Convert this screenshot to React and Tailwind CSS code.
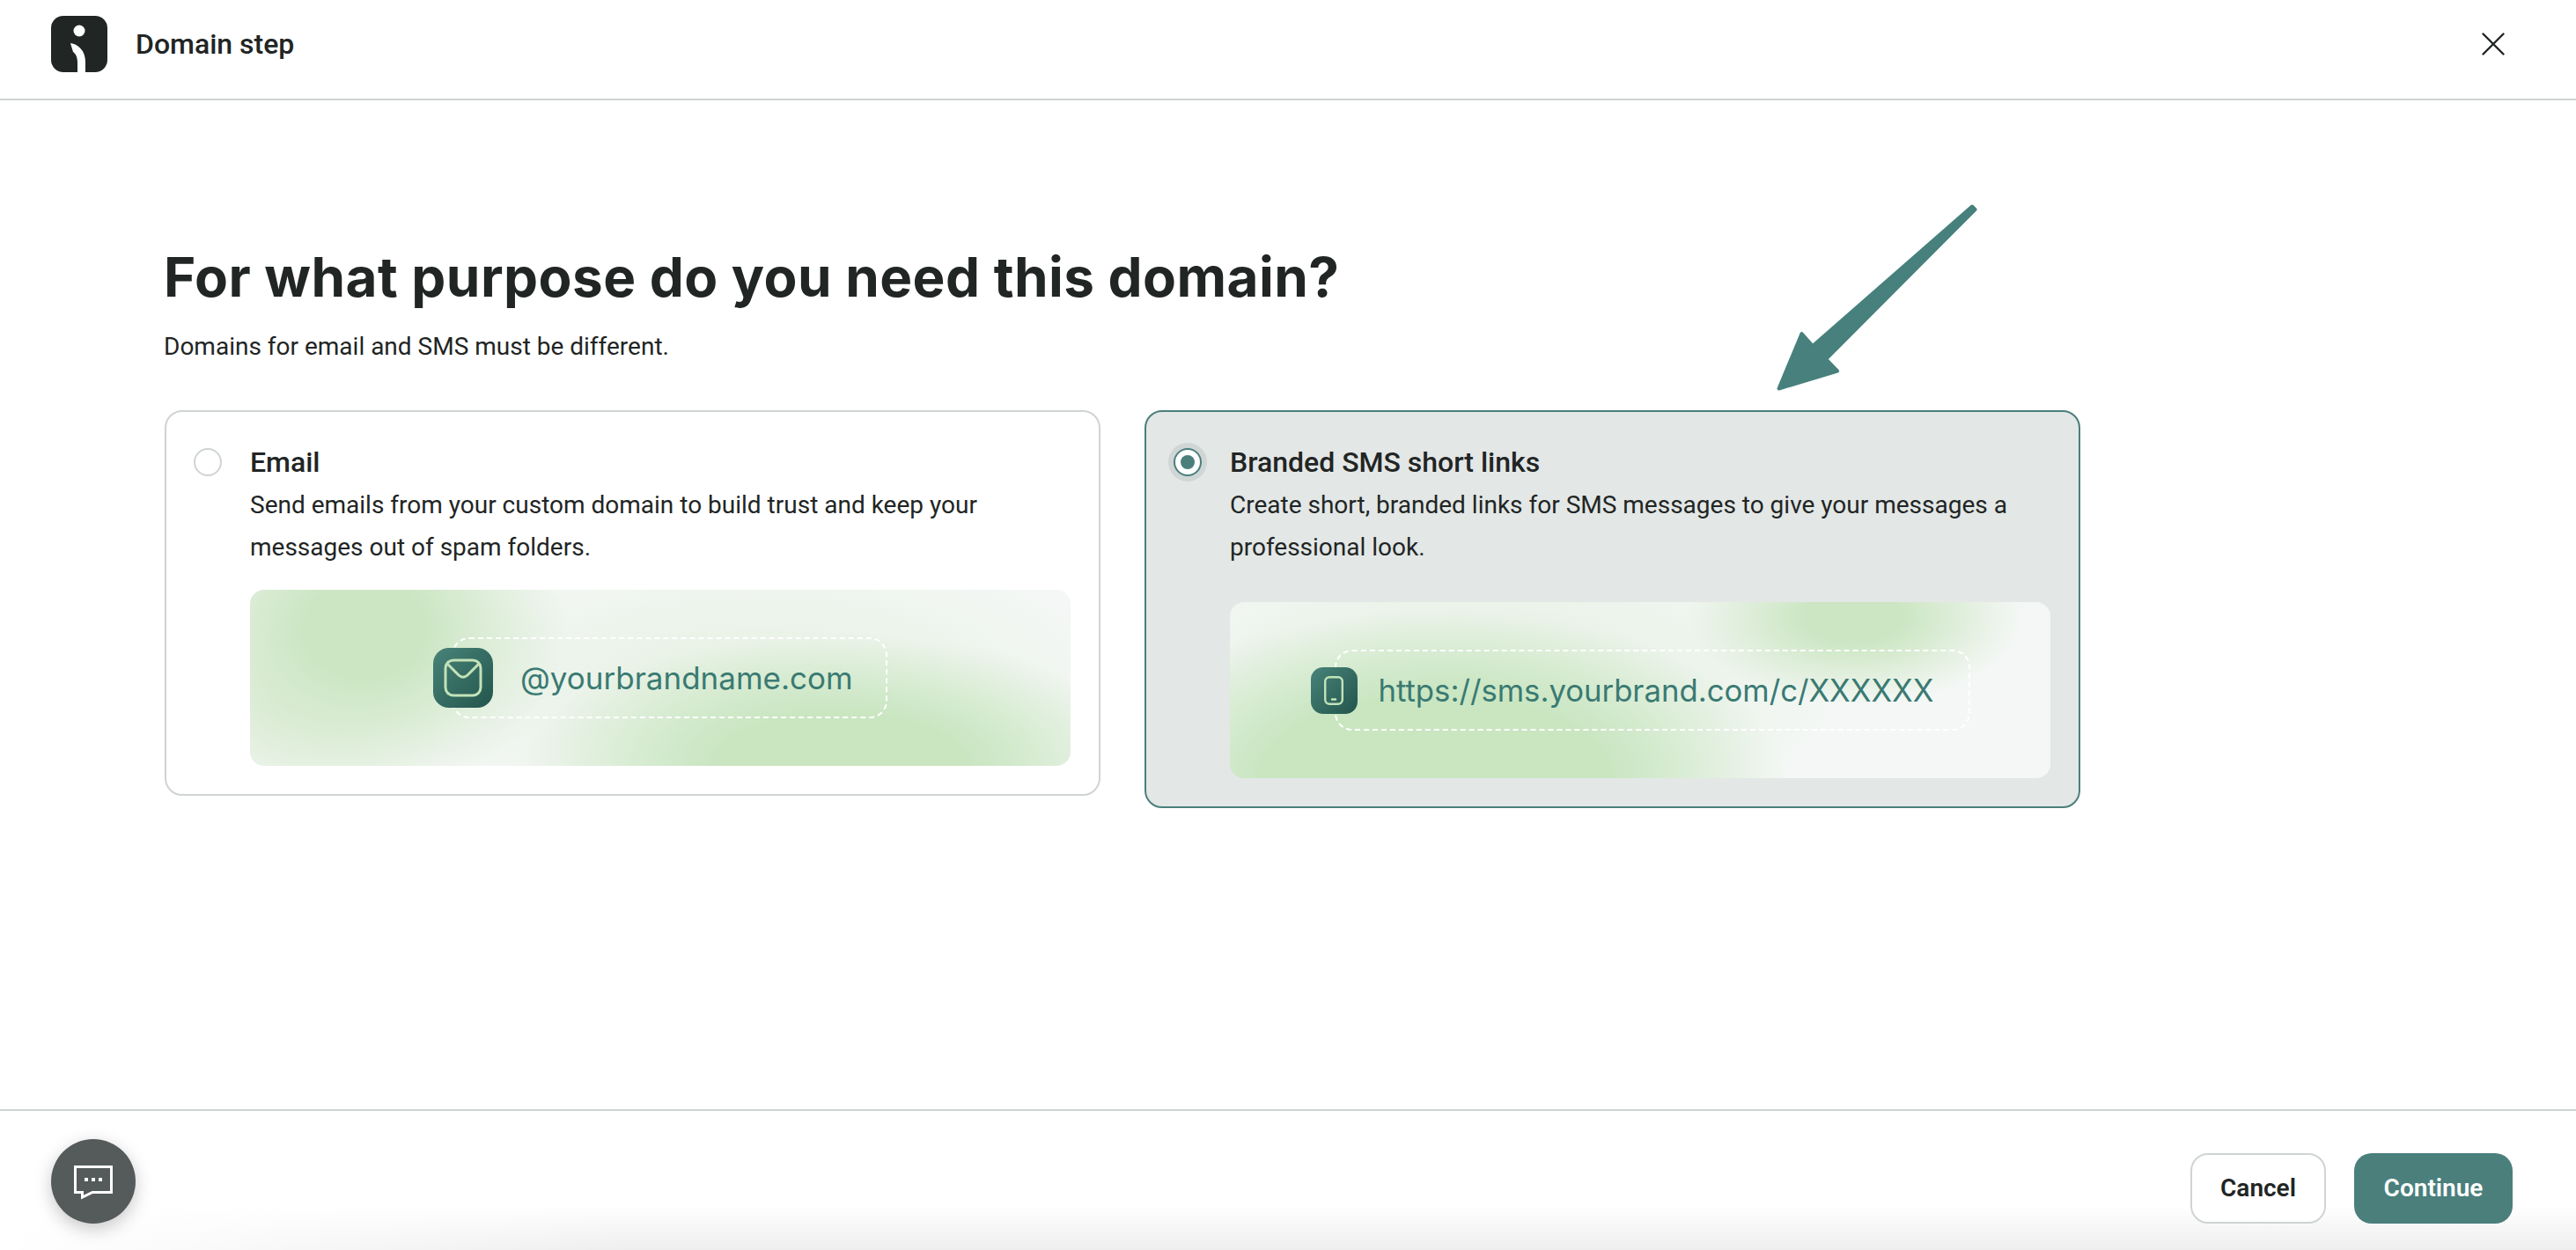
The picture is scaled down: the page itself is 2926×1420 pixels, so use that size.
import React from 'react';

const Logo = () => (
  <svg width="64" height="64" viewBox="0 0 64 64" className="shrink-0">
    <rect width="64" height="64" rx="14" fill="#212524" />
    <circle cx="32" cy="17" r="6.5" fill="#fff" />
    <path d="M22 31 C31 32 39 40 39 52 L39 64 L30 64 L30 53 C30 47 28 43 25 41 Z" fill="#fff" />
  </svg>
);

const CloseIcon = () => (
  <svg width="26" height="26" viewBox="0 0 26 26" fill="none" stroke="#212524" strokeWidth="2.4" strokeLinecap="round">
    <path d="M1.5 1.5 L24.5 24.5 M24.5 1.5 L1.5 24.5" />
  </svg>
);

const MailTile = () => (
  <div className="shrink-0 z-10 w-[68px] h-[68px] rounded-[18px] bg-gradient-to-br from-[#488379] to-[#23564d] flex items-center justify-center">
    <svg width="44" height="44" viewBox="0 0 44 44" fill="none" stroke="#c3e2b8" strokeWidth="3" strokeLinecap="round">
      <rect x="2" y="2" width="40" height="40" rx="9" />
      <path d="M4 6 L17 19 Q22 23.5 27 19 L40 6" />
    </svg>
  </div>
);

const PhoneTile = () => (
  <div className="shrink-0 z-10 w-[53px] h-[53px] rounded-[14px] bg-gradient-to-br from-[#488379] to-[#23564d] flex items-center justify-center">
    <svg width="22" height="33" viewBox="0 0 22 33" fill="none" stroke="#c3e2b8" strokeWidth="2.4" strokeLinecap="round">
      <rect x="1.2" y="1.2" width="19.6" height="30.6" rx="5" />
      <path d="M9 26.5 H13" />
    </svg>
  </div>
);

const Radio = ({ checked }) =>
  checked ? (
    <div className="shrink-0 w-8 h-8 mt-[9px] rounded-full bg-white border-2 border-[#4a7f7c] shadow-[0_0_0_6px_#d0d5d5] flex items-center justify-center">
      <div className="w-4 h-4 rounded-full bg-[#4a7f7c]" />
    </div>
  ) : (
    <div className="shrink-0 w-8 h-8 mt-[9px] rounded-full bg-white border-2 border-[#cfd4d3]" />
  );

const OptionCard = ({ checked, title, children, preview, previewClass }) => (
  <div
    className={`w-[1063px] shrink-0 rounded-[20px] border-2 pl-[31px] pr-8 pt-[32px] pb-8 flex gap-8 ${
      checked ? 'bg-[#e3e7e6] border-[#4a7f7c]' : 'bg-white border-[#cfd4d3]'
    }`}
  >
    <Radio checked={checked} />
    <div className="flex-1 min-w-0">
      <h3 className="text-[32px] leading-[50px] font-medium text-[#212524]">{title}</h3>
      <p className="text-[28px] leading-[48px] text-[#212524]">{children}</p>
      <div className={`h-[200px] rounded-[16px] flex items-center justify-center bg-[#f4f7f5] ${previewClass}`}>{preview}</div>
    </div>
  </div>
);

export default function App() {
  return (
    <div className="relative h-[1420px] flex flex-col bg-white font-['Roboto',sans-serif] overflow-hidden">
      <header className="h-[114px] shrink-0 border-b-2 border-[#cfd4d3] flex items-start justify-between pl-[58px] pr-[81px]">
        <div className="flex items-center gap-[32px] mt-[18px]">
          <Logo />
          <span className="text-[32px] leading-[64px] font-medium text-[#212524]">Domain step</span>
        </div>
        <button className="mt-[37px]">
          <CloseIcon />
        </button>
      </header>

      <main className="flex-1 pl-[187px] pt-[161px]">
        <h1 className="font-['Inter',sans-serif] text-[62px] leading-[80px] tracking-[0.45px] font-bold text-[#212524] -ml-px">
          For what purpose do you need this domain?
        </h1>
        <p className="text-[28px] leading-[40px] mt-[19px] text-[#212524] -ml-px">Domains for email and SMS must be different.</p>

        <div className="flex items-start gap-[50px] mt-[52px]">
          <OptionCard
            title="Email"
            previewClass="mt-[24px] bg-[radial-gradient(ellipse_230px_190px_at_14%_22%,#cce6c3_30%,transparent_100%),radial-gradient(ellipse_360px_150px_at_72%_100%,#c9e6c1_40%,transparent_100%),radial-gradient(ellipse_420px_180px_at_62%_62%,#e4f0e0,transparent_100%),radial-gradient(ellipse_200px_180px_at_3%_70%,#e6f0e2,transparent_100%)]"
            preview={
              <div className="flex items-center">
                <MailTile />
                <div className="-ml-[47px] w-[495px] h-[92px] rounded-[20px] border-2 border-dashed border-white flex items-center pl-[76px] font-['Inter',sans-serif] text-[35px] text-[#3a7a72]">
                  @yourbrandname.com
                </div>
              </div>
            }
          >
            Send emails from your custom domain to build trust and keep your messages out of spam folders.
          </OptionCard>

          <OptionCard
            checked
            title="Branded SMS short links"
            previewClass="mt-[38px] bg-[radial-gradient(ellipse_190px_100px_at_76%_8%,#cce6c3_30%,transparent_100%),radial-gradient(ellipse_400px_190px_at_25%_100%,#c9e6c1_50%,transparent_100%),radial-gradient(ellipse_420px_170px_at_30%_45%,#e2efde,transparent_100%)]"
            preview={
              <div className="flex items-center">
                <PhoneTile />
                <div className="-ml-[26px] w-[722px] h-[92px] rounded-[20px] border-2 border-dashed border-white flex items-center pl-[48px] font-['Inter',sans-serif] text-[34.7px] text-[#3a7a72]">
                  https://sms.yourbrand.com/c/XXXXXX
                </div>
              </div>
            }
          >
            Create short, branded links for SMS messages to give your messages a professional look.
          </OptionCard>
        </div>
      </main>

      <footer className="h-[160px] shrink-0 border-t-2 border-[#cfd4d3] flex items-start justify-between pl-[58px] pr-[72px] pt-[32px] bg-[linear-gradient(to_right,#ffffff,transparent_25%),linear-gradient(to_top,#eeeeee,#ffffff_50px)]">
        <button className="w-24 h-24 rounded-full bg-[#555b5b] shadow-[0_6px_20px_rgba(0,0,0,0.22)] flex items-center justify-center">
          <svg width="96" height="96" viewBox="0 0 96 96" fill="none">
            <path d="M27.5 31.5 H68.5 V60.5 H47 L35.5 66 V60.5 H27.5 Z" stroke="#fff" strokeWidth="3" />
            <rect x="38" y="44" width="4" height="4" fill="#fff" />
            <rect x="46" y="44" width="4" height="4" fill="#fff" />
            <rect x="54" y="44" width="4" height="4" fill="#fff" />
          </svg>
        </button>
        <div className="flex items-center gap-8 mt-4">
          <button className="w-[154px] h-[80px] rounded-[20px] border-2 border-[#cfd4d3] bg-white text-[28px] font-semibold text-[#212524]">
            Cancel
          </button>
          <button className="w-[180px] h-[80px] rounded-[20px] bg-[#4a7f7c] text-[28px] font-semibold text-white">
            Continue
          </button>
        </div>
      </footer>

      {/* annotation arrow drawn over the page */}
      <svg className="absolute left-[2000px] top-[220px]" width="260" height="240" viewBox="2000 220 260 240" fill="#47807c" stroke="#47807c" strokeLinejoin="round">
        <path d="M2240 234.5 L2243.5 238 L2074 408 L2087 421.5 L2020.5 441.5 L2046.5 379 L2059 393 Z" strokeWidth="4" />
      </svg>
    </div>
  );
}
